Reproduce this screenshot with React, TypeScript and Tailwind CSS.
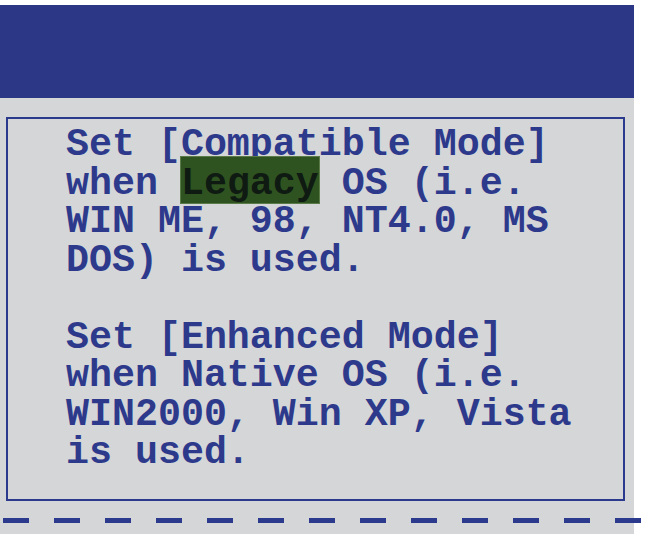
import React from "react";

export default function App() {
  const dashes = Array.from({ length: 13 });
  return (
    <div className="w-[648px] h-[534px] bg-white overflow-hidden">
      <div className="w-[634px] pt-[5px]">
        <div className="h-[93px] bg-[#2c3886]" />
        <div className="h-[436px] bg-[#d5d6d8] pt-[19px] pl-[6px]">
          <div className="w-[619px] h-[384px] border-2 border-[#2c3a8e] pl-[58px] pt-[7px]">
            <div
              className="text-[38.3px] leading-[38.5px] font-bold text-[#2d3a8c] whitespace-pre"
              style={{ fontFamily: '"Liberation Mono", "DejaVu Sans Mono", monospace' }}
            >
              <div>Set [Compatible Mode]</div>
              <div>
                when{" "}
                <span className="relative isolate text-[#0f1a12]">
                  <span className="absolute -z-10 left-0 right-0 top-[-5px] bottom-[3px] bg-[#2e5320] outline outline-1 outline-[#5a7a48]" />
                  Legacy
                </span>
                {" "}OS (i.e.
              </div>
              <div>WIN ME, 98, NT4.0, MS</div>
              <div>DOS) is used.</div>
              <div>&nbsp;</div>
              <div>Set [Enhanced Mode]</div>
              <div>when Native OS (i.e.</div>
              <div>WIN2000, Win XP, Vista</div>
              <div>is used.</div>
            </div>
          </div>
          <div className="flex gap-[25px] mt-[17px] -ml-[3px] w-[660px]">
            {dashes.map((_, i) => (
              <div key={i} className="w-[26px] h-[5px] bg-[#2c3a8e] shrink-0" />
            ))}
          </div>
        </div>
      </div>
    </div>
  );
}
